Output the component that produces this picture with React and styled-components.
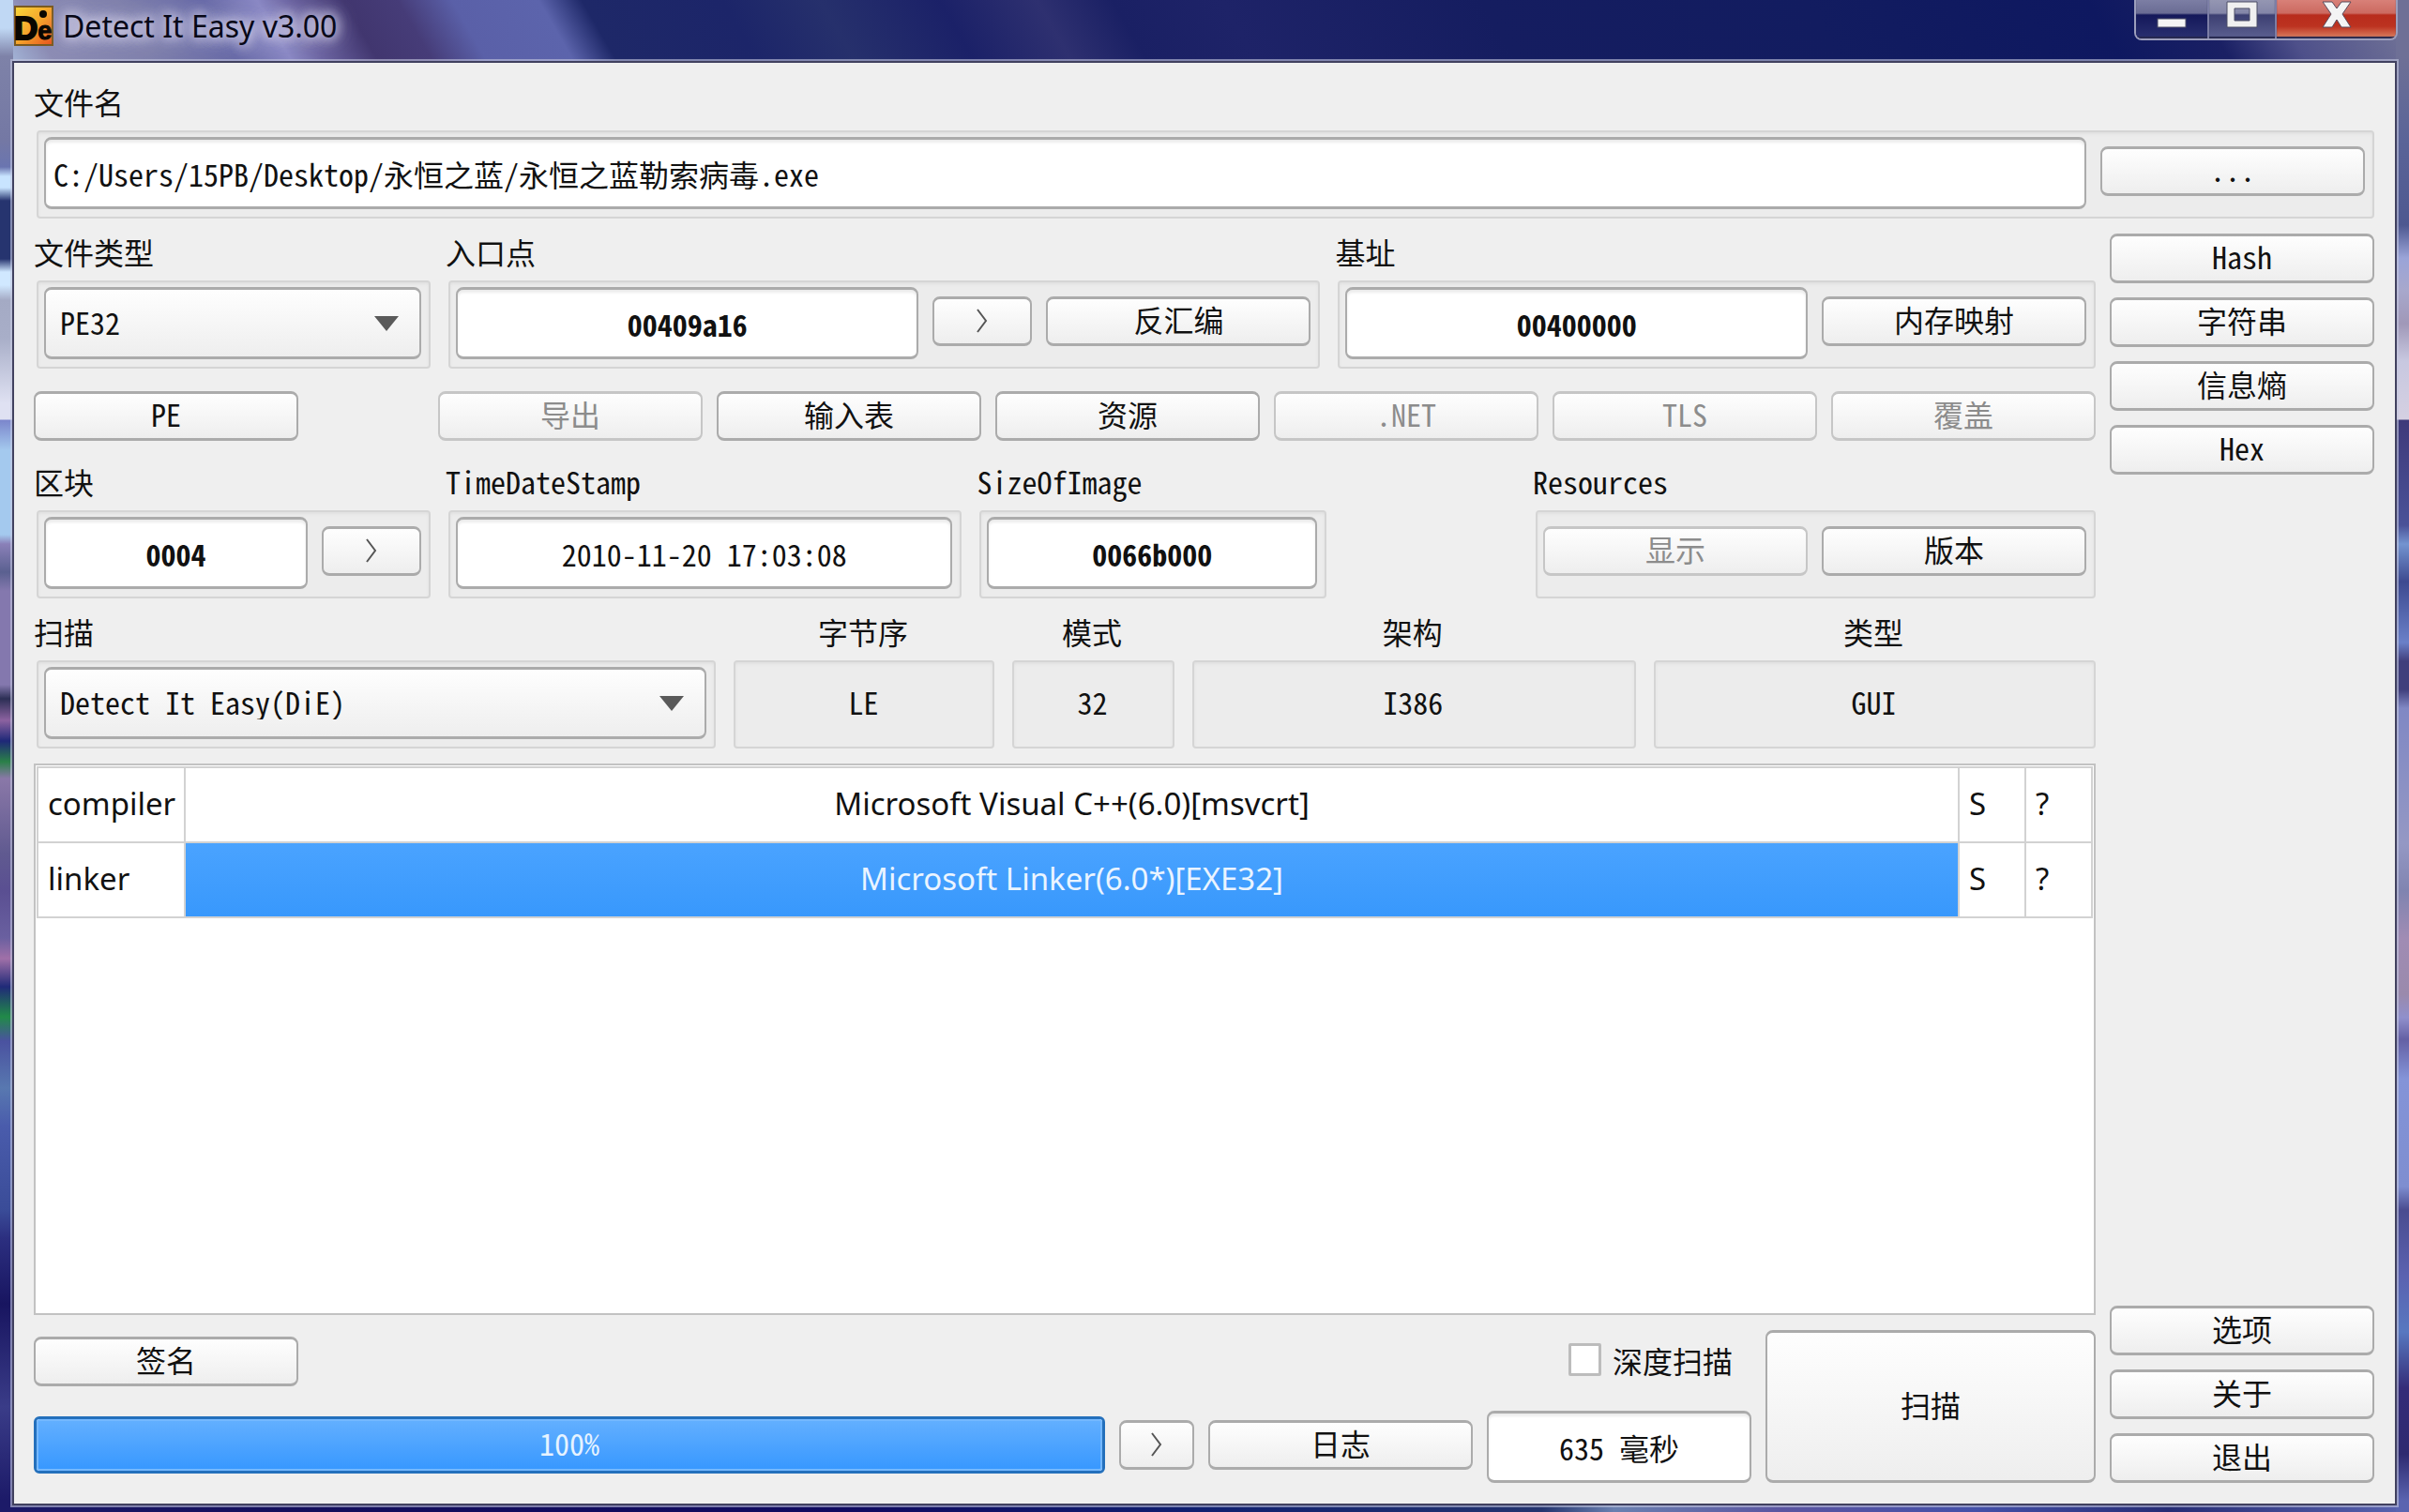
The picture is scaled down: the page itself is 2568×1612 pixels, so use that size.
import { useState } from "react";
import styled, { createGlobalStyle, css } from "styled-components"

const monoFont = `"Noto Sans Mono CJK SC", "Liberation Mono", "Noto Sans CJK SC", monospace`
const uiFont = `"Noto Sans", "Noto Sans CJK SC", sans-serif`

export default function App() {
    const [fileType, setFileType] = useState("PE32")
    const [engine, setEngine] = useState("Detect It Easy(DiE)")
    const [deepScan, setDeepScan] = useState(false)
    const [selectedRow, setSelectedRow] = useState(1)
    const progress = 100
    const detects = [{type: "compiler", value: "Microsoft Visual C++(6.0)[msvcrt]"},
                     {type: "linker", value: "Microsoft Linker(6.0*)[EXE32]"}]
    const sections = [{name: "导出", disabled: true},
                      {name: "输入表"},
                      {name: "资源"},
                      {name: ".NET", disabled: true},
                      {name: "TLS", disabled: true},
                      {name: "覆盖", disabled: true}]
    const summary = [{id: "endian", name: "字节序", value: "LE"},
                     {id: "mode", name: "模式", value: "32"},
                     {id: "arch", name: "架构", value: "I386"},
                     {id: "kind", name: "类型", value: "GUI"}]

    return (
        <Desktop>
            <GlobalStyle />
            <TitleBar>
                <Logo />
                <Title>Detect It Easy v3.00</Title>
                <CaptionButtons />
            </TitleBar>
            <Window>
                <Field>
                    <Label htmlFor="file">文件名</Label>
                    <Group>
                        <TextBox id="file" defaultValue="C:/Users/15PB/Desktop/永恒之蓝/永恒之蓝勒索病毒.exe" />
                        <Button>...</Button>
                    </Group>
                </Field>
                <Columns>
                    <Main>
                        <HeadRow>
                            <Field>
                                <Label htmlFor="fileType">文件类型</Label>
                                <Group>
                                    <SelectBox>
                                        <Select id="fileType" value={fileType} onChange={e => setFileType(e.target.value)}>
                                            <option>PE32</option>
                                            <option>Binary</option>
                                        </Select>
                                    </SelectBox>
                                </Group>
                            </Field>
                            <Field>
                                <Label htmlFor="entry">入口点</Label>
                                <Group>
                                    <TextBox id="entry" $center $bold readOnly value="00409a16" />
                                    <Button $size="small" aria-label="入口点"><Arrow /></Button>
                                    <Button>反汇编</Button>
                                </Group>
                            </Field>
                            <Field>
                                <Label htmlFor="base">基址</Label>
                                <Group>
                                    <TextBox id="base" $center $bold readOnly value="00400000" />
                                    <Button>内存映射</Button>
                                </Group>
                            </Field>
                        </HeadRow>
                        <ButtonRow>
                            <Button>PE</Button>
                            <ButtonSet>
                                {sections.map(section => (
                                    <Button key={section.name} disabled={section.disabled}>{section.name}</Button>
                                ))}
                            </ButtonSet>
                        </ButtonRow>
                        <InfoRow>
                            <Field>
                                <Label htmlFor="blocks">区块</Label>
                                <Group>
                                    <TextBox id="blocks" $center $bold readOnly value="0004" />
                                    <Button $size="small" aria-label="区块"><Arrow /></Button>
                                </Group>
                            </Field>
                            <Field>
                                <Label htmlFor="stamp">TimeDateStamp</Label>
                                <Group>
                                    <TextBox id="stamp" $center readOnly value="2010-11-20 17:03:08" />
                                </Group>
                            </Field>
                            <Field>
                                <Label htmlFor="imageSize">SizeOfImage</Label>
                                <Group>
                                    <TextBox id="imageSize" $center $bold readOnly value="0066b000" />
                                </Group>
                            </Field>
                            <Field>
                                <Label as="span">Resources</Label>
                                <Group>
                                    <Button disabled>显示</Button>
                                    <Button>版本</Button>
                                </Group>
                            </Field>
                        </InfoRow>
                        <ScanRow>
                            <Field>
                                <Label htmlFor="engine">扫描</Label>
                                <Group>
                                    <SelectBox>
                                        <Select id="engine" value={engine} onChange={e => setEngine(e.target.value)}>
                                            <option>Detect It Easy(DiE)</option>
                                            <option>Nauz File Detector(NFD)</option>
                                        </Select>
                                    </SelectBox>
                                </Group>
                            </Field>
                            {summary.map(item => (
                                <Field key={item.id}>
                                    <Label $center htmlFor={item.id}>{item.name}</Label>
                                    <Group><Value id={item.id}>{item.value}</Value></Group>
                                </Field>
                            ))}
                        </ScanRow>
                        <Results>
                            <Table>
                                <colgroup>
                                    <TypeCol />
                                    <col />
                                    <MarkCol />
                                    <MarkCol />
                                </colgroup>
                                <tbody>
                                    {detects.map((detect, index) => (
                                        <tr key={detect.type} onClick={() => setSelectedRow(index)}>
                                            <Cell>{detect.type}</Cell>
                                            <Cell $center $selected={index === selectedRow}>{detect.value}</Cell>
                                            <Cell>S</Cell>
                                            <Cell>?</Cell>
                                        </tr>
                                    ))}
                                </tbody>
                            </Table>
                        </Results>
                        <Footer>
                            <FooterMain>
                                <FooterTop>
                                    <Button>签名</Button>
                                    <CheckLabel>
                                        <CheckBox checked={deepScan} onChange={e => setDeepScan(e.target.checked)} />
                                        深度扫描
                                    </CheckLabel>
                                </FooterTop>
                                <FooterBottom>
                                    <Progress role="progressbar" aria-valuenow={progress}>
                                        <ProgressFill style={{width: `${progress}%`}}>{progress}%</ProgressFill>
                                    </Progress>
                                    <Button $size="tiny" aria-label="扫描目录"><Arrow /></Button>
                                    <Button>日志</Button>
                                    <Elapsed aria-label="扫描时间" $center readOnly value="635 毫秒" />
                                </FooterBottom>
                            </FooterMain>
                            <ScanButton>扫描</ScanButton>
                        </Footer>
                    </Main>
                    <Side>
                        <SideGroup>
                            <Button>Hash</Button>
                            <Button>字符串</Button>
                            <Button>信息熵</Button>
                            <Button>Hex</Button>
                        </SideGroup>
                        <SideGroup>
                            <Button>选项</Button>
                            <Button>关于</Button>
                            <Button>退出</Button>
                        </SideGroup>
                    </Side>
                </Columns>
            </Window>
        </Desktop>
    );
}

function Logo() {
    return (
        <LogoSvg viewBox="0 0 42 43">
            <defs>
                <linearGradient id="logoFill" x1="0" y1="0" x2="1" y2="1">
                    <stop offset="0" stopColor="#f8d83a" />
                    <stop offset="0.5" stopColor="#f5a52c" />
                    <stop offset="1" stopColor="#e8501c" />
                </linearGradient>
            </defs>
            <rect x="1" y="1" width="40" height="41" fill="url(#logoFill)" stroke="#7a5a20" strokeWidth="2" />
            <text x="0" y="36" fontFamily="Liberation Sans" fontWeight="bold" fontSize="35" fill="#0a0600" stroke="#0a0600" strokeWidth="2">
                D<tspan fontSize="27" strokeWidth="1">e</tspan>
            </text>
            <circle cx="31" cy="9" r="4" fill="#0a0600" />
        </LogoSvg>
    );
}

function Arrow() {
    return (
        <ArrowSvg viewBox="0 0 14 26">
            <path d="M2 1 L11 13 L2 25" fill="none" stroke="#555" strokeWidth="2" />
        </ArrowSvg>
    );
}

function CaptionButtons() {
    return (
        <Caption>
            <CaptionButton aria-label="最小化">
                <CaptionSvg viewBox="0 0 34 30">
                    <rect x="2" y="20" width="30" height="9" fill="#f4f4f4" stroke="#4c4e66" strokeWidth="1" />
                </CaptionSvg>
            </CaptionButton>
            <CaptionButton aria-label="最大化" $tone="light">
                <CaptionSvg viewBox="0 0 34 30">
                    <path d="M1 2 H33 V29 H1 Z M9 9 V22 H25 V9 Z" fill="#f0f0f0" stroke="#4c4e66" strokeWidth="1" fillRule="evenodd" />
                </CaptionSvg>
            </CaptionButton>
            <CaptionButton aria-label="关闭" $tone="close">
                <CaptionSvg viewBox="0 0 34 30">
                    <path d="M2 2 H12 L17 9 L22 2 H32 L23 15 L32 29 H22 L17 21 L12 29 H2 L11 15 Z" fill="#f4f4f4" stroke="#5a4a5a" strokeWidth="1" />
                </CaptionSvg>
            </CaptionButton>
        </Caption>
    );
}

const GlobalStyle = createGlobalStyle`
    * {
        box-sizing: border-box;
    }
    body {
        margin: 0;
    }
    button, input, select, output {
        font: inherit;
        color: inherit;
    }
`

const leftEdge = `linear-gradient(#c0d8f4 0px, #c0d8f4 30px, #7e82a8 60px, #7478a4 150px, #6a75b0 178px, #c8e4ff 188px,
    #c8e4ff 200px, #26346f 214px, #26346f 276px, #d0e8ff 290px, #d0e8ff 304px, #a4aac4 320px, #a8aec8 360px,
    #dfe1f2 430px, #dfe1f2 447px, #7b86cc 448px, #a4c9ee 480px, #a4c9ee 570px, #8a80b8 580px, #5a6090 610px,
    #8478ae 630px, #8478ae 730px, #2c2f55 745px, #8c62a0 768px, #1e2878 790px, #2a8048 812px, #8a78a8 830px,
    #605a90 910px, #5a4f92 950px, #6a60a0 1000px, #a070a8 1022px, #202a78 1052px, #218a48 1084px, #4a52a0 1110px,
    #5878b0 1160px, #4a5cac 1200px, #3a4c98 1290px, #2c2f80 1320px, #181560 1390px, #3a3c88 1500px, #1c1a68 1600px)`

const rightEdge = `linear-gradient(#6e7096 0px, #6e7096 60px, #5a6498 150px, #4e5890 240px, #9aa4d8 275px, #a8a8cc 310px,
    #a098b8 345px, #c8c8e0 385px, #d5d0e2 447px, #3e3a7a 448px, #4a5298 560px, #7494d0 580px, #3d4a90 620px,
    #6a80c8 685px, #403f7c 705px, #403f7c 735px, #8088c4 755px, #9498c4 900px, #8084b0 950px, #a08cb4 1000px,
    #9a8aac 1060px, #9090cc 1085px, #6460a4 1108px, #8494d8 1150px, #7e8ed0 1265px, #4a4c90 1290px, #5a62b0 1360px,
    #5878c0 1420px, #342c78 1480px, #2e2a70 1550px, #5a64b0 1600px)`

const topEdge = `linear-gradient(60deg, #a9bfe0 0px, #8c8cb4 50px, #7f80ac 140px, #6668a6 220px, #8a88c4 270px, #6a62a0 300px,
    #41366f 350px, #463c78 400px, #5a60a8 450px, #5c64ac 530px, #1e2868 570px, #1c2569 700px, #26306c 790px,
    #1b2168 900px, #2e3070 990px, #1a2064 1060px, #1e2368 1160px, #151d60 1400px, #121c60 1700px, #0e1860 1960px,
    #1a2064 2060px, #4e508a 2130px, #6e7096 2230px)`

const bottomEdge = `linear-gradient(90deg, #1c1a68, #140f5c 12%, #100a60 35%, #102070 50%, #24346e 64%, #6a80b0 67%,
    #5a54a0 74%, #4450a8 82%, #262c74 90%, #5a64b0)`

const Desktop = styled.div`
    min-height: 100vh;
    display: flex;
    flex-direction: column;
    font-family: ${monoFont};
    font-size: 32px;
    line-height: 38px;
    color: #111;
    background:
        ${leftEdge} left top / 14px 100% no-repeat,
        ${rightEdge} right top / 14px 100% no-repeat,
        ${topEdge} left top / 100% 66px no-repeat,
        ${bottomEdge};
`

const TitleBar = styled.header`
    height: 65px;
    display: flex;
    align-items: flex-start;
    gap: 10px;
    padding: 0 12px 0 15px;
`

const LogoSvg = styled.svg`
    width: 42px;
    height: 43px;
    margin-top: 6px;
`

const Title = styled.h1`
    flex: 1;
    margin: 8px 0 0;
    font-family: ${uiFont};
    font-weight: normal;
    font-size: 32px;
    line-height: 40px;
    color: #080818;
    text-shadow: 0 0 12px #d0cee6, 0 0 12px #d0cee6, 0 0 18px #d0cee6, 0 0 24px #c4c2e0;
`

const Caption = styled.div`
    height: 43px;
    display: flex;
    border: 2px solid #9c9ebc;
    border-top: 0;
    border-radius: 0 0 8px 8px;
    overflow: hidden;
`

const captionTones = {
    dark: css`
        width: 78px;
        background: linear-gradient(#7c7ea4, #6a6c94 14px, #14185a 16px, #2a3070);
    `,
    light: css`
        width: 72px;
        background: linear-gradient(#9496b2, #8486a8 14px, #3c3f72 16px, #5c6090);
    `,
    close: css`
        width: 127px;
        background: linear-gradient(#d88078, #cc6a60 14px, #b82c1c 16px, #bc3220 28px, #dc8464);
    `,
}

const CaptionButton = styled.button`
    display: flex;
    align-items: flex-start;
    justify-content: center;
    padding: 0;
    border: 0;
    border-right: 2px solid #7c7ea6;
    box-shadow: inset 0 -2px 1px #26284e;
    ${({ $tone = "dark" }) => captionTones[$tone]}
    &:last-child {
        border-right: 0;
    }
`

const CaptionSvg = styled.svg`
    width: 34px;
    height: 30px;
`

const Window = styled.main`
    flex: 1;
    display: flex;
    flex-direction: column;
    gap: 16px;
    margin: 0 13px 7px;
    padding: 22px 22px 22px 21px;
    background: #efefef;
    border: 2px solid #41415f;
    box-shadow: 0 0 0 2px rgba(196, 200, 224, 0.6);
`

const Columns = styled.div`
    flex: 1;
    display: flex;
    gap: 15px;
`

const Main = styled.div`
    flex: 1;
    min-width: 0;
    display: flex;
    flex-direction: column;
    gap: 16px;
`

const Side = styled.aside`
    display: flex;
    flex-direction: column;
    justify-content: space-between;
`

const SideGroup = styled.div`
    display: flex;
    flex-direction: column;
    gap: 15px;
`

const Row = styled.div`
    display: grid;
    gap: 16px;
`

const HeadRow = styled(Row)`
    grid-template-columns: 423px 933fr 811fr;
`

const InfoRow = styled(Row)`
    grid-template-columns: 423px 550fr 372fr 188fr 600px;
    & > :last-child {
        grid-column: 5;
    }
`

const ScanRow = styled(Row)`
    grid-template-columns: 727fr 281fr 175fr 476fr 474fr;
`

const ButtonRow = styled.div`
    display: flex;
    justify-content: space-between;
    gap: 15px;
    margin: 8px 0;
`

const ButtonSet = styled.div`
    display: flex;
    gap: 15px;
`

const Field = styled.div`
    min-width: 0;
    display: flex;
    flex-direction: column;
    gap: 12px;
`

const Label = styled.label`
    text-align: ${({ $center }) => $center ? "center" : "left"};
`

const Group = styled.div`
    height: 94px;
    display: flex;
    align-items: center;
    gap: 15px;
    margin-left: 3px;
    padding: 5px 8px 8px 6px;
    background: #ececec;
    border: 2px solid #d5d5d5;
    border-radius: 4px;
    box-shadow: inset 0 2px 3px #e0e0e0;
`

const fieldFrame = css`
    border: solid #ababab;
    border-width: 3px 2px;
    border-radius: 8px;
`

const raised = css`
    background: linear-gradient(#fefefe, #eeeeee);
`

const TextBox = styled.input`
    flex: 1;
    min-width: 0;
    height: 77px;
    padding: 0 8px;
    background: #fff;
    box-shadow: inset 0 3px 3px #ececec;
    text-align: ${({ $center }) => $center ? "center" : "left"};
    font-weight: ${({ $bold }) => $bold ? "bold" : "normal"};
    ${fieldFrame}
`

const Elapsed = styled(TextBox)`
    flex: none;
    width: 282px;
`

const SelectBox = styled.div`
    position: relative;
    flex: 1;
    &::after {
        content: "";
        position: absolute;
        top: 31px;
        right: 24px;
        border: 13px solid transparent;
        border-top: 16px solid #5a5a5a;
        border-bottom: 0;
        pointer-events: none;
    }
`

const Select = styled.select`
    display: block;
    width: 100%;
    height: 77px;
    padding: 0 60px 3px 15px;
    appearance: none;
    ${raised}
    ${fieldFrame}
`

const buttonWidths = { normal: 282, small: 106, tiny: 80 }

const Button = styled.button`
    flex: none;
    width: ${({ $size = "normal" }) => buttonWidths[$size]}px;
    height: 53px;
    display: flex;
    align-items: center;
    justify-content: center;
    padding: 0 0 5px;
    ${raised}
    ${fieldFrame}
    &:disabled {
        color: #8c8c8c;
        border-color: #c6c6c6;
    }
    ${Group} > & {
        margin-bottom: 4px;
    }
`

const ArrowSvg = styled.svg`
    width: 14px;
    height: 26px;
    margin-top: 4px;
`

const Value = styled.output`
    flex: 1;
    padding-bottom: 3px;
    text-align: center;
`

const Results = styled.div`
    flex: 1;
    padding: 1px;
    background: #fff;
    border: 2px solid #c2c2c2;
`

const Table = styled.table`
    width: 100%;
    table-layout: fixed;
    border-collapse: collapse;
    font-family: ${uiFont};
    font-size: 33px;
`

const TypeCol = styled.col`
    width: 157px;
`

const MarkCol = styled.col`
    width: 71px;
`

const Cell = styled.td`
    height: 80px;
    padding: 0 10px 3px;
    border: 2px solid #d2d2d2;
    text-align: ${({ $center }) => $center ? "center" : "left"};
    ${({ $selected }) => $selected && css`
        color: #eaf4ff;
        background: linear-gradient(#4aa3ff, #3898fc);
    `}
`

const Footer = styled.footer`
    display: flex;
    gap: 15px;
`

const FooterMain = styled.div`
    flex: 1;
    display: flex;
    flex-direction: column;
    justify-content: space-between;
`

const FooterTop = styled.div`
    display: flex;
    align-items: center;
    justify-content: space-between;
    padding: 7px 20px 0 0;
`

const FooterBottom = styled.div`
    display: flex;
    align-items: center;
    gap: 15px;
    & > :not(input) {
        margin-bottom: 4px;
    }
`

const CheckLabel = styled.label`
    display: flex;
    align-items: center;
    gap: 12px;
    padding-bottom: 4px;
`

const CheckBox = styled.input.attrs({type:"checkbox"})`
    width: 35px;
    height: 35px;
    margin: 0;
    appearance: none;
    background: #fff;
    border: 3px solid #bcbcbc;
    border-radius: 2px;
    &:checked {
        background: #4aa3ff;
    }
`

const Progress = styled.div`
    flex: 1;
    height: 61px;
    background: #fff;
    border: 3px solid #2470bc;
    border-radius: 6px;
`

const ProgressFill = styled.div`
    height: 100%;
    display: flex;
    align-items: center;
    justify-content: center;
    padding-bottom: 5px;
    color: #e6f3ff;
    background: linear-gradient(#62afff, #3898ff);
    border: 2px solid #74b8ff;
    border-radius: 3px;
`

const ScanButton = styled(Button)`
    width: 352px;
    height: 163px;
`
